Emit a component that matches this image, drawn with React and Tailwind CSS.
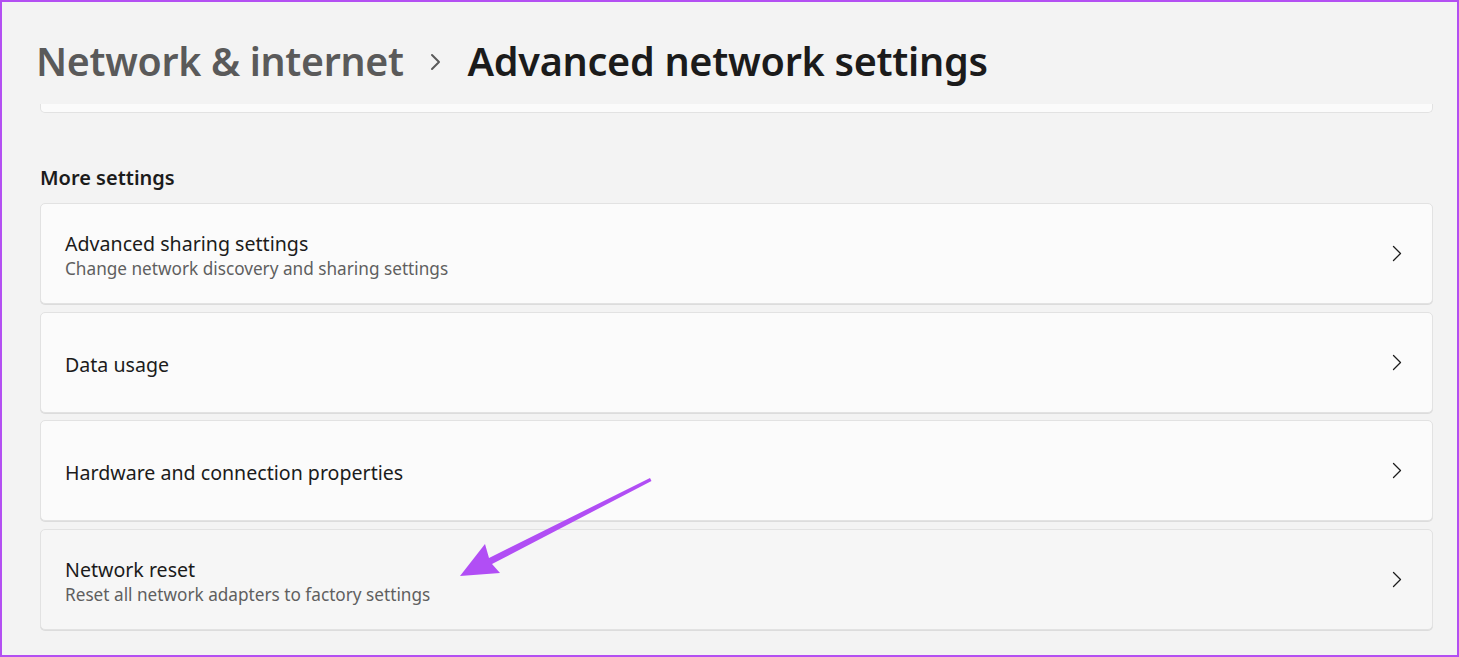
import React from "react";

function Chevron() {
  return (
    <svg width="10" height="17" viewBox="0 0 10 17" className="shrink-0">
      <path d="M1.5 1.5 L8.5 8.5 L1.5 15.5" fill="none" stroke="#1b1b1b" strokeWidth="1.3" strokeLinecap="round" strokeLinejoin="round" />
    </svg>
  );
}

function Card({ title, subtitle, hovered }) {
  return (
    <div
      className={`h-[101px] rounded-[5px] border border-[#e2e2e2] ${hovered ? "bg-[#f6f6f6]" : "bg-[#fbfbfb]"} flex items-center justify-between pl-[24px] pr-[30px] shadow-[0_1px_0_#dcdcdc]`}
    >
      <div className="flex flex-col pt-[5px]">
        <div className="text-[19.6px] leading-[26px] text-[#1b1b1b]">{title}</div>
        {subtitle && <div className="text-[17.2px] leading-[24px] text-[#5f5f5f]">{subtitle}</div>}
      </div>
      <Chevron />
    </div>
  );
}

export default function App() {
  return (
    <div
      className="relative w-[1459px] h-[657px] overflow-hidden border-2 border-[#b34ff2] bg-[#f3f3f3]"
      style={{ fontFamily: "'Noto Sans', 'Open Sans', sans-serif" }}
    >
      <div className="flex items-center pl-[34px] pt-[21px] h-[96px]">
        <span className="text-[39.3px] leading-[50px] font-semibold text-[#5a5a5a] tracking-[-0.3px]">Network &amp; internet</span>
        <svg width="14" height="20" viewBox="0 0 14 20" className="ml-[25px] mr-[25px] mt-[2px]">
          <path d="M3 3 L10 10 L3 17" fill="none" stroke="#5a5a5a" strokeWidth="2" strokeLinecap="round" strokeLinejoin="round" />
        </svg>
        <span className="text-[39.6px] leading-[50px] font-semibold text-[#1b1b1b] tracking-[-0.3px]">Advanced network settings</span>
      </div>
      <div className="ml-[38px] mr-[24px] mt-[6px] h-[9px] rounded-b-[5px] border border-t-0 border-[#e2e2e2] bg-[#fbfbfb]" />
      <div className="pl-[38px] mt-[52px] text-[20px] leading-[26px] font-semibold text-[#1b1b1b]">More settings</div>
      <div className="ml-[38px] mr-[24px] mt-[12px] flex flex-col gap-[7.7px]">
        <Card title="Advanced sharing settings" subtitle="Change network discovery and sharing settings" />
        <Card title="Data usage" />
        <Card title="Hardware and connection properties" />
        <Card title="Network reset" subtitle="Reset all network adapters to factory settings" hovered />
      </div>
      <svg className="absolute left-0 top-0 pointer-events-none" width="1459" height="657">
        <polygon points="648,476 649.5,479 490,562 498,571 458,574 483,542 487,556" fill="#b14ef5" />
      </svg>
    </div>
  );
}
